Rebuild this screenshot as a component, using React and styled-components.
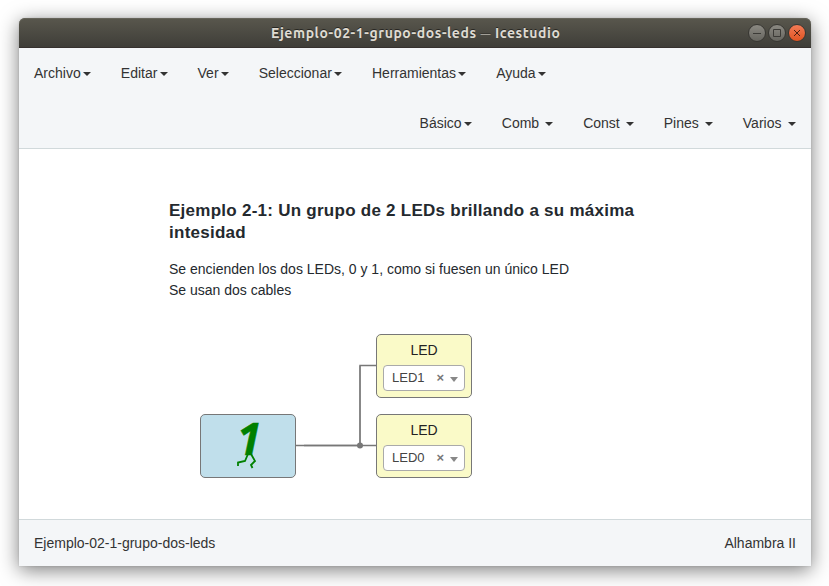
import React from "react";
import styled, { createGlobalStyle } from "styled-components";

const GlobalStyle = createGlobalStyle`
  * { box-sizing: border-box; }
  body {
    margin: 0;
    background: #fff;
    font-family: "Liberation Sans", Arial, sans-serif;
    font-size: 14px;
    line-height: 20px;
    color: #333;
    overflow: hidden;
  }
`;

const Desktop = styled.div`
  height: 586px;
  padding: 18px 18px 20px 19px;
`;

const Window = styled.main`
  display: flex;
  flex-direction: column;
  height: 548px;
  border-radius: 6px 6px 0 0;
  background: #fff;
  box-shadow: 0 4px 20px rgba(0, 0, 0, 0.52), 0 0 2px rgba(0, 0, 0, 0.15);
`;

const TitleBar = styled.header`
  display: grid;
  grid-template-columns: 1fr auto 1fr;
  align-items: center;
  height: 30px;
  padding: 0 5px;
  border-radius: 6px 6px 0 0;
  background: linear-gradient(#59574d, #3e3d38);
  box-shadow: inset 0 1px #66645a, inset 0 -1px #36312f;
`;

const Title = styled.h1`
  grid-column: 2;
  margin: 0;
  width: 288px;
  color: #dfdbd2;
  font: 700 14px/30px Ubuntu, "Noto Sans", sans-serif;
  letter-spacing: 0.57px;
  white-space: nowrap;
  text-shadow: 0 -1px rgba(0, 0, 0, 0.5);
`;

const Dash = styled.span`
  font-size: 10px;
  font-weight: 400;
  line-height: 1;
  vertical-align: 1px;
`;

const WindowControls = styled.div`
  display: flex;
  justify-content: flex-end;
  gap: 2px;
`;

const ControlButton = styled.button`
  display: block;
  width: 18px;
  height: 18px;
  padding: 0;
  border: 1px solid #383733;
  border-radius: 50%;
  color: ${(p) => (p.$close ? "#4d2012" : "#3c3b37")};
  background: ${(p) =>
    p.$close
      ? "linear-gradient(#f37b56, #e05422)"
      : "linear-gradient(#8b8982, #66655f)"};
  svg { display: block; }
`;

const NavBar = styled.nav`
  height: 101px;
  background: #f4f6f8;
  border-bottom: 1px solid #d1d9db;
`;

const Menu = styled.ul`
  display: flex;
  justify-content: ${(p) => (p.$end ? "flex-end" : "flex-start")};
  height: 50px;
  margin: 0;
  padding: 0 ${(p) => (p.$end ? "0.5px" : "0")} 0 0;
  list-style: none;
`;

const MenuItem = styled.li`
  padding: 15px;
  white-space: pre;
`;

const Caret = styled.span`
  display: inline-block;
  margin-left: 2.15px;
  vertical-align: middle;
  border-top: 4px solid #333;
  border-left: 4px solid transparent;
  border-right: 4px solid transparent;
`;

const Canvas = styled.section`
  position: relative;
  flex: 1;
  padding: 50px 150px 0;
`;

const Note = styled.article`
  color: #24292e;
  h2 {
    margin: 0 0 15px;
    padding-top: 1px;
    font-size: 17px;
    line-height: 22px;
    letter-spacing: 0.26px;
  }
  p {
    margin: 0;
    line-height: 21px;
  }
`;

const Wires = styled.svg`
  position: absolute;
  left: 276px;
  top: 205px;
`;

const Block = styled.div`
  position: absolute;
  left: ${(p) => p.$x}px;
  top: ${(p) => p.$y}px;
  width: 96px;
  height: 64px;
  border: 1px solid #777;
  border-radius: 5px;
  background: ${(p) => p.$fill};
`;

const ConstantBlock = styled(Block)`
  svg {
    display: block;
    overflow: visible;
  }
`;

const OutputBlock = styled(Block)`
  display: flex;
  flex-direction: column;
  padding: 5px 6px 6px;
`;

const BlockLabel = styled.div`
  flex: none;
  height: 25px;
  line-height: 20px;
  color: #222;
  text-align: center;
`;

const PinSelect = styled.div`
  display: flex;
  align-items: center;
  height: 26px;
  padding: 0 6px 0 8px;
  border: 1px solid #aaa;
  border-radius: 4px;
  background: #fff;
  color: #444;
  font-size: 13px;
  line-height: 24px;
`;

const PinName = styled.span`
  flex: 1;
`;

const Clear = styled.span`
  color: #777;
  font-weight: 700;
  margin-right: 6px;
`;

const SelectArrow = styled.span`
  margin-top: 2px;
  border: solid transparent;
  border-width: 5px 4px 0;
  border-top-color: #888;
`;

const StatusBar = styled.footer`
  display: flex;
  justify-content: space-between;
  height: 47px;
  padding: 13px 15px;
  border-top: 1px solid #d1d9db;
  background: #f4f6f8;
`;

const mainMenu = ["Archivo", "Editar", "Ver", "Seleccionar", "Herramientas", "Ayuda"];
const blockMenu = ["Básico", "Comb ", "Const ", "Pines ", "Varios "];

function DropdownMenu({ items, end }) {
  return (
    <Menu $end={end}>
      {items.map((label) => (
        <MenuItem key={label}>{label}<Caret /></MenuItem>
      ))}
    </Menu>
  );
}

function OutputPin({ x, y, pin }) {
  return (
    <OutputBlock $x={x} $y={y} $fill="#fafac8">
      <BlockLabel>LED</BlockLabel>
      <PinSelect>
        <PinName>{pin}</PinName>
        <Clear>×</Clear>
        <SelectArrow />
      </PinSelect>
    </OutputBlock>
  );
}

function ControlIcon({ d }) {
  return (
    <svg width="16" height="16" fill="none" stroke="currentColor">
      <path d={d} />
    </svg>
  );
}

export default function App() {
  return (
    <>
      <GlobalStyle />
      <Desktop>
        <Window>
          <TitleBar>
            <Title>Ejemplo-02-1-grupo-dos-leds <Dash>—</Dash> Icestudio</Title>
            <WindowControls>
              <ControlButton aria-label="Minimizar"><ControlIcon d="M4 8.5H12" /></ControlButton>
              <ControlButton aria-label="Maximizar"><ControlIcon d="M4.5 4.5H11.5V11.5H4.5Z" /></ControlButton>
              <ControlButton $close aria-label="Cerrar"><ControlIcon d="M5 5L11 11M11 5L5 11" /></ControlButton>
            </WindowControls>
          </TitleBar>
          <NavBar>
            <DropdownMenu items={mainMenu} />
            <DropdownMenu items={blockMenu} end />
          </NavBar>
          <Canvas>
            <Note>
              <h2>Ejemplo 2-1: Un grupo de 2 LEDs brillando a su máxima intesidad</h2>
              <p>Se encienden los dos LEDs, 0 y 1, como si fuesen un único LED</p>
              <p>Se usan dos cables</p>
            </Note>
            <Wires width="84" height="100" fill="none">
              <path d="M1 91.5H82M65 91V11.5H82" stroke="#777" strokeWidth="1.5" />
              <path d="M9 91.5H65M65 91.5V12" stroke="#777" strokeOpacity="0.5" strokeWidth="2" />
              <circle cx="65" cy="91.5" r="3" fill="#777" />
            </Wires>
            <ConstantBlock $x={181} $y={265} $fill="#c0dfeb">
              <svg width="94" height="62" fill="none">
                <text x="36" y="40" fill="green" stroke="green" strokeWidth="0.5" fontFamily="Open Sans" fontSize="44" fontWeight="700" fontStyle="italic">1</text>
                <path d="M47 39L44 46L37 47.5V51M50 39L54 46L50 50L51.5 53" stroke="green" strokeWidth="1.8" />
              </svg>
            </ConstantBlock>
            <OutputPin x={357} y={185} pin="LED1" />
            <OutputPin x={357} y={265} pin="LED0" />
          </Canvas>
          <StatusBar>
            <span>Ejemplo-02-1-grupo-dos-leds</span>
            <span>Alhambra II</span>
          </StatusBar>
        </Window>
      </Desktop>
    </>
  );
}
